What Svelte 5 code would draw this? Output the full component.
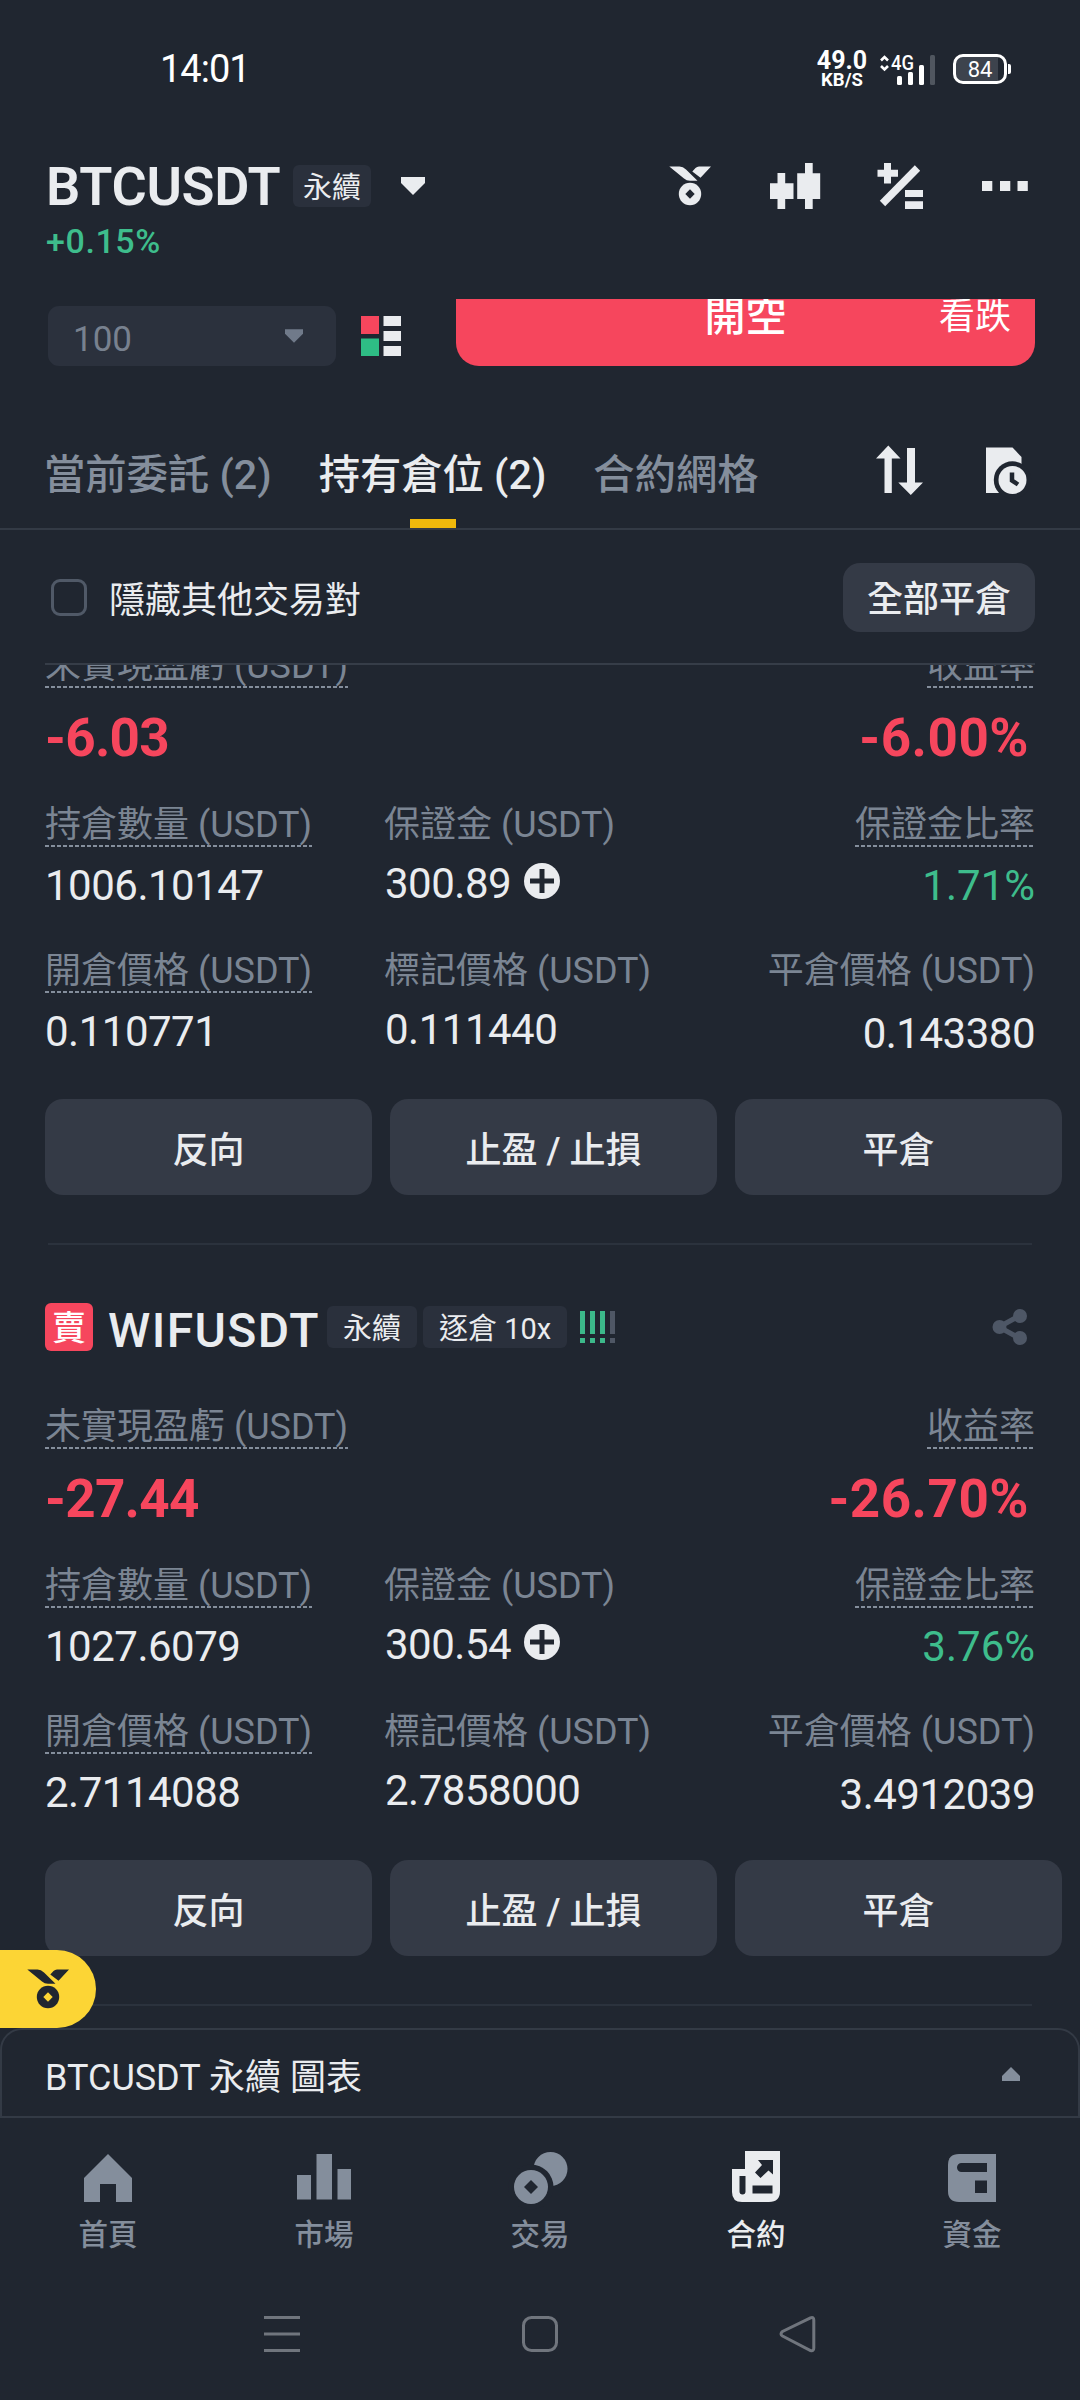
<script lang="ts">
    // open positions, newest at the top of the list
    const positions = [
        {
            symbol: '',
            pnl: '-6.03',
            roi: '-6.00%',
            size: '1006.10147',
            margin: '300.89',
            ratio: '1.71%',
            entry: '0.110771',
            mark: '0.111440',
            close: '0.143380'
        },
        {
            symbol: 'WIFUSDT',
            pnl: '-27.44',
            roi: '-26.70%',
            size: '1027.6079',
            margin: '300.54',
            ratio: '3.76%',
            entry: '2.7114088',
            mark: '2.7858000',
            close: '3.4912039'
        }
    ];

    const actions = ['反向', '止盈 / 止損', '平倉'];

    let activeTab = $state(1);
    const tabs = ['當前委託 (2)', '持有倉位 (2)', '合約網格'];

    let activeNav = $state(3);
    const navItems = ['首頁', '市場', '交易', '合約', '資金'];
</script>

{#snippet medal(hole: string)}
    <svg class="icon" viewBox="0 0 48 48">
        <path d="M3.3 4.5H13.5Q17 4.5 20 7.500L31.500 18.800H24Q20.500 18.800 18 16.500ZM26.300 9.500L29.500 6Q31 4.500 33 4.500H45L34.500 15.800Z" />
        <circle cx="24" cy="32" r="11.200" />
        <path d="M24 27.300L28.700 32L24 36.700L19.300 32Z" fill={hole} />
    </svg>
{/snippet}

<div class="screen">
    <div class="status">
        <span class="clock">14:01</span>
        <div class="status-right">
            <div class="speed"><b>49.0</b><span>KB/S</span></div>
            <svg class="signal" viewBox="0 0 58 34" width="58" height="34">
                <path d="M2 8.500L5.500 5L9 8.500M2 14L5.500 17.500L9 14" fill="none" stroke="#fff" stroke-width="2.600" />
                <text x="12" y="18" class="net" textLength="23" lengthAdjust="spacingAndGlyphs">4G</text>
                <rect x="18" y="24" width="5" height="9" rx="1.500" />
                <rect x="29" y="20" width="5" height="13" rx="1.500" />
                <rect x="40" y="13" width="5" height="20" rx="1.500" />
                <rect x="51" y="3" width="5" height="30" rx="1.500" fill="#50565f" />
            </svg>
            <div class="battery"><span>84</span></div>
            <i class="nub"></i>
        </div>
    </div>

    <header>
        <div class="pair">
            <div class="pair-row">
                <h1>BTCUSDT</h1>
                <span class="tag">永續</span>
                <svg class="caret" viewBox="0 0 24 18" width="24" height="18"><path d="M0 0H24V6L12 18L0 6Z" /></svg>
            </div>
            <span class="change">+0.15%</span>
        </div>
        <div class="tools">
            {@render medal('#202630')}
            <svg class="icon" viewBox="0 0 48 48">
                <path d="M-1 21.300H22.500V37H-1ZM6.500 11H14.200V47H6.500ZM26.200 11.300H49.200V37H26.200ZM34 1H41.700V47H34Z" />
            </svg>
            <svg class="icon" viewBox="0 0 48 48">
                <path d="M8 1H15V21.500H8ZM1.500 7.800H22V14.800H1.500ZM29 28H47V35H29ZM29 39.200H47V47H29Z" />
                <path d="M41.500 6L6.500 41.500" stroke="#eaecef" stroke-width="7.500" />
            </svg>
            <svg class="icon" viewBox="0 0 48 48">
                <path d="M1 19H11.300V29H1ZM19 19H29.300V29H19ZM36.500 19H46.800V29H36.500Z" />
            </svg>
        </div>
    </header>

    <section class="order">
        <div class="depth">
            <span>100</span>
            <svg viewBox="0 0 24 18" width="18" height="14"><path d="M0 0H24V6L12 18L0 6Z" fill="#707a8a" /></svg>
        </div>
        <svg class="book" viewBox="0 0 40 40" width="40" height="40">
            <rect width="18" height="18" fill="#f6465d" />
            <rect y="22.500" width="18" height="17.500" fill="#2ebd85" />
            <path d="M22.500 0H40V10H22.500ZM22.500 15H40V25H22.500ZM22.500 30H40V40H22.500Z" fill="#eaecef" />
        </svg>
        <button class="short"><b>開空</b><span>看跌</span></button>
    </section>

    <nav class="tabs">
        {#each tabs as tab, i}
            <button class:active={i === activeTab} onclick={() => (activeTab = i)}>{tab}</button>
        {/each}
        <div class="tab-tools">
            <svg class="icon" viewBox="0 0 48 48">
                <path d="M12.300 -.5L24.500 12.500H15.800V47H8.500V12.500H0ZM31 2H39V36.500H47L34.800 49L22.300 36.500H31Z" />
            </svg>
            <svg class="icon" viewBox="0 0 48 48">
                <path d="M5 1.500H31.500L40.500 11V47H5Z" />
                <circle cx="31.500" cy="34" r="18.700" fill="#202630" />
                <circle cx="31.500" cy="34" r="14" />
                <path d="M31 26.500V34.500L37 38.500" fill="none" stroke="#202630" stroke-width="4.500" />
            </svg>
        </div>
    </nav>

    <div class="filter">
        <i class="checkbox"></i>
        <span>隱藏其他交易對</span>
        <button>全部平倉</button>
    </div>

    <main>
        <div class="list">
            {#each positions as p}
                <article>
                    <div class="head">
                        {#if p.symbol}
                            <span class="side">賣</span>
                            <h2>{p.symbol}</h2>
                            <span class="tag">永續</span>
                            <span class="tag">逐倉 10x</span>
                            <svg class="risk" viewBox="0 0 35 32" width="35" height="32">
                                <path d="M0 0H5V23H0ZM0 27H5V32H0ZM10 0H15V23H10ZM10 27H15V32H10ZM20 0H25V23H20ZM20 27H25V32H20Z" fill="#3cb98a" />
                                <path d="M30 0H35V23H30ZM30 27H35V32H30Z" fill="#4f5765" />
                            </svg>
                            <svg class="share" viewBox="0 0 36 36" width="36" height="36">
                                <path d="M7 18L27 7M7 18L27 29" stroke="#4e5766" stroke-width="5" />
                                <circle cx="7.500" cy="18" r="7" /><circle cx="28" cy="7" r="7" /><circle cx="28" cy="29" r="7" />
                            </svg>
                        {/if}
                    </div>
                    <div class="row pnl">
                        <div><span class="label dotted">未實現盈虧 (USDT)</span><strong>{p.pnl}</strong></div>
                        <div class="end"><span class="label dotted">收益率</span><strong>{p.roi}</strong></div>
                    </div>
                    <div class="row grid">
                        <div><span class="label dotted">持倉數量 (USDT)</span><span class="value">{p.size}</span></div>
                        <div>
                            <span class="label">保證金 (USDT)</span>
                            <span class="value mid">
                                {p.margin}
                                <svg class="plus" viewBox="0 0 36 36" width="36" height="36">
                                    <circle cx="18" cy="18" r="18" />
                                    <path d="M18 6V30M6 18H30" stroke="#202630" stroke-width="5" />
                                </svg>
                            </span>
                        </div>
                        <div class="end"><span class="label dotted">保證金比率</span><span class="value up">{p.ratio}</span></div>
                    </div>
                    <div class="row grid">
                        <div><span class="label dotted">開倉價格 (USDT)</span><span class="value">{p.entry}</span></div>
                        <div><span class="label">標記價格 (USDT)</span><span class="value mid">{p.mark}</span></div>
                        <div class="end"><span class="label">平倉價格 (USDT)</span><span class="value low">{p.close}</span></div>
                    </div>
                    <div class="actions">
                        {#each actions as action}
                            <button>{action}</button>
                        {/each}
                    </div>
                </article>
            {/each}
        </div>
        <div class="float">{@render medal('#fcd535')}</div>
    </main>

    <div class="chart">
        <span>BTCUSDT 永續 圖表</span>
        <svg viewBox="0 0 18 14" width="18" height="14"><path d="M9 0L18 9V14H0V9Z" fill="#848e9c" /></svg>
    </div>

    <nav class="bottom">
        {#each navItems as item, i}
            <button class:active={i === activeNav} onclick={() => (activeNav = i)}>
                <svg class="icon" viewBox="0 0 48 48">
                    {#if i === 0}
                        <path d="M24 0L48 24V48H32V30H16V48H0V24Z" />
                    {:else if i === 1}
                        <path d="M-3 21H11V45.500H-3ZM16.500 0H32V45.500H16.500ZM37.500 15H51V45.500H37.500Z" />
                    {:else if i === 2}
                        <circle cx="34.500" cy="15" r="17" />
                        <circle cx="15" cy="33" r="22.500" fill="#202630" />
                        <circle cx="15" cy="33" r="17" />
                        <path d="M15 26L22 33L15 40L8 33Z" fill="#202630" />
                    {:else if i === 3}
                        <path d="M13 -3H48V37Q48 48 37 48H10Q0 48 0 38V15H13Z" />
                        <path d="M7.500 22H13.500V37.500A3 3 0 0 1 7.500 37.500ZM20.500 31.500H40.500V39.500H20.500ZM26 6H41V20.500L36.500 16.500L28.500 24L23 18.500L30 11Z" fill="#202630" />
                    {:else}
                        <path d="M11 0H48V48H11Q0 48 0 37V11Q0 0 11 0Z" />
                        <path d="M13.500 9H39V18H13.500A4.500 4.500 0 0 1 13.500 9ZM27 26.500H39V39H27Z" fill="#202630" />
                    {/if}
                </svg>
                <span>{item}</span>
            </button>
        {/each}
    </nav>

    <div class="system">
        <svg viewBox="0 0 36 36"><path d="M0 1.500H36M0 18H36M0 34.500H36" /></svg>
        <svg viewBox="0 0 36 36"><rect x="1.500" y="1.500" width="33" height="33" rx="8" /></svg>
        <svg viewBox="0 0 36 36"><path d="M30.500 1.800L2.500 15.500Q-.5 18 2.500 20L30.500 34.500Q33.800 35.500 33.800 32V4Q33.800 .5 30.500 1.800Z" /></svg>
    </div>
</div>

<style>
    :global(body) {
        background: #202630;
    }

    .screen {
        display: flex;
        flex-direction: column;
        width: 1080px;
        height: 2400px;
        overflow: hidden;
        background: #202630;
        color: #eaecef;
        font-family: Roboto, "Noto Sans CJK TC", sans-serif;
        font-size: 36px;
        line-height: 44px;
        white-space: nowrap;
    }

    button {
        margin: 0;
        padding: 0;
        border: 0;
        background: none;
        color: inherit;
        font: inherit;
    }

    h1,
    h2 {
        margin: 0;
    }

    svg {
        display: block;
        flex: none;
        overflow: visible;
        fill: #eaecef;
    }

    .icon {
        width: 48px;
        height: 48px;
    }

    /* status bar */
    .status {
        display: flex;
        align-items: center;
        justify-content: space-between;
        box-sizing: border-box;
        height: 138px;
        padding: 0 69px 0 160px;
        color: #fff;
    }

    .clock {
        font-size: 38px;
        letter-spacing: -1px;
    }

    .status-right {
        display: flex;
        align-items: center;
    }

    .speed {
        display: flex;
        flex-direction: column;
        align-items: center;
        width: 50px;
        margin-right: 12px;
        font-size: 25px;
        line-height: 22px;
    }

    .speed b {
        font-weight: 700;
    }

    .speed span {
        font-size: 18.5px;
        font-weight: 700;
        line-height: 17px;
    }

    .signal {
        fill: #fff;
    }

    .net {
        font-size: 21px;
        font-weight: 500;
    }

    .battery {
        box-sizing: border-box;
        width: 54px;
        height: 30px;
        margin-left: 16px;
        border: 3px solid #fff;
        border-radius: 10px;
        background: linear-gradient(90deg, #3d434d 42px, #202630 42px);
        font-size: 22px;
        line-height: 25px;
        text-align: center;
    }

    .nub {
        width: 3px;
        height: 10px;
        margin-left: 1px;
        border-radius: 0 2px 2px 0;
        background: #fff;
    }

    /* pair header */
    header {
        display: flex;
        justify-content: space-between;
        box-sizing: border-box;
        height: 161px;
        padding: 24px 51px 0 46px;
    }

    .pair-row {
        display: flex;
        align-items: center;
        height: 48px;
    }

    h1 {
        width: 247px;
        font-size: 54px;
        font-weight: 600;
        letter-spacing: -0.3px;
        line-height: 54px;
        padding-top: 2px;
    }

    .tag {
        box-sizing: border-box;
        height: 42px;
        padding: 0 10px;
        border-radius: 6px;
        background: #2a303c;
        font-size: 29px;
        line-height: 47px;
    }

    .pair .caret {
        margin-left: 30px;
    }

    .change {
        display: block;
        margin-top: 9px;
        color: #3ebd8c;
        font-size: 34px;
        font-weight: 500;
        letter-spacing: 0.6px;
    }

    .tools,
    .tab-tools {
        display: flex;
        gap: 57px;
    }

    /* order form, scrolled under the header */
    .order {
        display: flex;
        align-items: flex-end;
        height: 67px;
        padding: 0 45px 0 48px;
    }

    .depth {
        display: flex;
        align-items: center;
        justify-content: space-between;
        box-sizing: border-box;
        width: 288px;
        height: 60px;
        padding: 0 33px 0 25px;
        border-radius: 11px;
        background: #2b313d;
        color: #78818f;
        font-size: 35px;
    }

    .depth span {
        padding-top: 7px;
    }

    .book {
        margin: 0 55px 10px 25px;
    }

    .short {
        display: grid;
        grid-template-columns: 1fr auto 1fr;
        width: 579px;
        height: 67px;
        padding-right: 24px;
        padding-left: 24px;
        overflow: hidden;
        border-radius: 0 0 23px 23px;
        background: #f6465d;
        color: #fff;
        line-height: 36px;
        align-items: start;
    }

    .short b {
        grid-column: 2;
        font-size: 41px;
        font-weight: 500;
    }

    .short span {
        text-align: right;
    }

    /* tabs */
    .tabs {
        display: flex;
        align-items: flex-start;
        box-sizing: border-box;
        height: 164px;
        padding: 81px 51px 0 44px;
        border-bottom: 2px solid #333a45;
    }

    .tabs button {
        position: relative;
        display: flex;
        align-items: flex-start;
        height: 81px;
        margin-right: 47px;
        color: #848e9c;
        font-size: 41.3px;
        font-weight: 500;
        line-height: 56px;
    }

    .tabs button.active {
        color: #eaecef;
    }

    .tabs button.active::after {
        position: absolute;
        bottom: 0;
        left: calc(50% - 23px);
        width: 46px;
        height: 9px;
        background: #f0b90b;
        content: '';
    }

    .tab-tools {
        margin-top: -1px;
        margin-left: auto;
    }

    .filter {
        display: flex;
        align-items: center;
        box-sizing: border-box;
        height: 135px;
        margin: 0 45px;
        padding-top: 2px;
        border-bottom: 2px solid #363d48;
    }

    .filter span {
        padding-top: 6px;
    }

    .checkbox {
        box-sizing: border-box;
        width: 36px;
        height: 37px;
        margin: 0 22px 0 6px;
        border: 3px solid #505967;
        border-radius: 9px;
    }

    .filter button {
        width: 192px;
        height: 69px;
        margin-left: auto;
        padding-top: 5px;
        border-radius: 17px;
        background: #343a46;
        font-weight: 500;
    }

    /* position list */
    main {
        position: relative;
        height: 1363px;
    }

    .list {
        height: 1363px;
        overflow: hidden;
    }

    article {
        position: relative;
        box-sizing: border-box;
        height: 761px;
        padding: 54px 45px 0 45px;
    }

    article:first-child {
        margin-top: -181px;
    }

    article::after {
        position: absolute;
        right: 48px;
        bottom: 0;
        left: 48px;
        height: 2px;
        background: #2b323d;
        content: '';
    }

    .head {
        display: flex;
        align-items: center;
        height: 56px;
    }

    .side {
        width: 48px;
        height: 48px;
        margin-right: 15px;
        border-radius: 6px;
        background: #f6465d;
        color: #fff;
        font-size: 34px;
        font-weight: 500;
        line-height: 51px;
        text-align: center;
    }

    h2 {
        width: 219px;
        font-size: 48px;
        font-weight: 500;
        letter-spacing: 1.4px;
        line-height: 64px;
        padding-top: 8px;
    }

    .head .tag {
        margin-right: 6px;
        padding: 0 16px;
    }

    .risk {
        margin-left: 7px;
    }

    .share {
        margin-right: 7px;
        margin-left: auto;
        fill: #4e5766;
    }

    .row {
        display: flex;
        justify-content: space-between;
    }

    .row > div {
        display: flex;
        flex-direction: column;
        align-items: flex-start;
    }

    .row > .end {
        align-items: flex-end;
    }

    .pnl {
        box-sizing: border-box;
        height: 207px;
        padding-top: 48px;
    }

    .grid {
        display: grid;
        grid-template-columns: 339px 1fr auto;
        height: 146px;
    }

    .label {
        box-sizing: border-box;
        height: 46px;
        padding-top: 1.5px;
        color: #7b8593;
        font-size: 36px;
        line-height: 44px;
    }

    .dotted {
        background: repeating-linear-gradient(90deg, #848e9c 0 4px, transparent 4px 6px) 0 100% / 100% 2px no-repeat;
    }

    strong {
        margin-top: 17px;
        color: #f6465d;
        font-size: 53px;
        font-weight: 700;
        letter-spacing: -0.7px;
        line-height: 66px;
    }

    .end strong {
        margin-right: 6px;
        letter-spacing: 0.5px;
    }

    .value {
        display: flex;
        align-items: center;
        margin-top: 14px;
        font-size: 42px;
        letter-spacing: -0.5px;
        line-height: 50px;
    }

    .value.mid {
        margin-top: 12px;
        margin-left: 1px;
    }

    .value.low {
        margin-top: 16px;
    }

    .up {
        color: #3ebd8c;
        letter-spacing: 0;
    }

    .plus {
        margin: -7px 0 0 13px;
    }

    .actions {
        display: grid;
        grid-template-columns: repeat(3, 327px);
        gap: 18px;
        margin-top: 6px;
    }

    .actions button {
        height: 96px;
        padding-top: 7px;
        border-radius: 18px;
        background: #343a46;
        font-weight: 500;
    }

    .float {
        position: absolute;
        bottom: 0;
        left: 0;
        display: flex;
        align-items: center;
        box-sizing: border-box;
        width: 96px;
        height: 78px;
        padding-left: 24px;
        border-radius: 0 39px 39px 0;
        background: #fcd535;
    }

    .float .icon {
        fill: #202630;
    }

    .chart {
        display: flex;
        align-items: center;
        justify-content: space-between;
        box-sizing: border-box;
        height: 90px;
        padding: 2px 58px 0 43px;
        border: 2px solid #333a45;
        border-radius: 22px 22px 0 0;
    }

    .chart span {
        padding-top: 7px;
    }

    .bottom {
        display: grid;
        grid-template-columns: repeat(5, 216px);
        height: 150px;
    }

    .bottom button {
        display: flex;
        flex-direction: column;
        align-items: center;
        gap: 12px;
        padding-top: 36px;
        color: #848e9c;
        font-size: 29.5px;
        font-weight: 500;
        line-height: 42px;
    }

    .bottom .icon {
        fill: #848e9c;
    }

    .bottom .active {
        color: #eaecef;
    }

    .bottom .active .icon {
        fill: #eaecef;
    }

    .system {
        display: flex;
        align-items: center;
        justify-content: center;
        gap: 222px;
        height: 132px;
    }

    .system svg {
        width: 36px;
        height: 36px;
        fill: none;
        stroke: #70757d;
        stroke-width: 3;
    }
</style>
